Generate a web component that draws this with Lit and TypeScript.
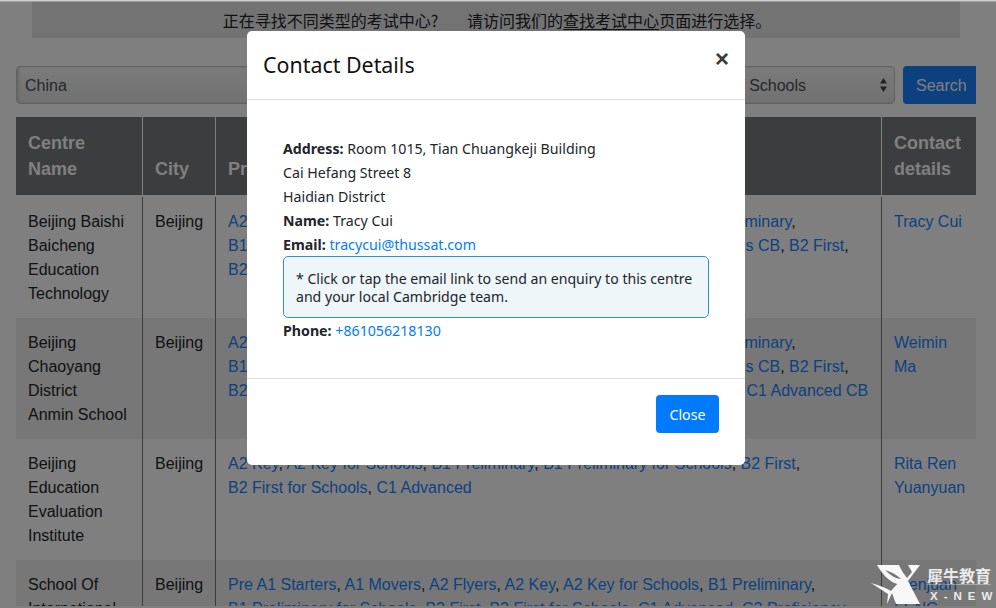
import { LitElement, html, css } from "lit";
import { customElement } from "lit/decorators.js";

type Row = { name: string[]; city: string; lines: string[][]; contact: string[] };

const ROWS: Row[] = [
  {
    name: ["Beijing Baishi", "Baicheng", "Education", "Technology"],
    city: "Beijing",
    lines: [
      ["A2 Key", "A2 Key CB", "A2 Key for Schools", "A2 Key for Schools CB", "B1 Preliminary"],
      ["B1 Preliminary CB", "B1 Preliminary for Schools", "B1 Preliminary for Schools CB", "B2 First"],
      ["B2 First CB", "B2 First for Schools", "B2 First for Schools CB"],
    ],
    contact: ["Tracy Cui"],
  },
  {
    name: ["Beijing", "Chaoyang", "District", "Anmin School"],
    city: "Beijing",
    lines: [
      ["A2 Key", "A2 Key CB", "A2 Key for Schools", "A2 Key for Schools CB", "B1 Preliminary"],
      ["B1 Preliminary CB", "B1 Preliminary for Schools", "B1 Preliminary for Schools CB", "B2 First"],
      ["B2 First CB", "B2 First for Schools", "B2 First for Schools CB", "C1 Advanced", "C1 Advanced CB"],
    ],
    contact: ["Weimin", "Ma"],
  },
  {
    name: ["Beijing", "Education", "Evaluation", "Institute"],
    city: "Beijing",
    lines: [
      ["A2 Key", "A2 Key for Schools", "B1 Preliminary", "B1 Preliminary for Schools", "B2 First"],
      ["B2 First for Schools", "C1 Advanced"],
    ],
    contact: ["Rita Ren", "Yuanyuan"],
  },
  {
    name: ["School Of", "International", "Education", "Studies"],
    city: "Beijing",
    lines: [
      ["Pre A1 Starters", "A1 Movers", "A2 Flyers", "A2 Key", "A2 Key for Schools", "B1 Preliminary"],
      ["B1 Preliminary for Schools", "B2 First", "B2 First for Schools", "C1 Advanced", "C2 Proficiency"],
    ],
    contact: ["Wenjuan", "FENG"],
  },
];

@customElement("app-root")
export class AppRoot extends LitElement {
  static styles = css`
    :host {
      display: block;
      width: 996px;
      height: 608px;
      position: relative;
      overflow: hidden;
      background: #fff;
      font-family: "Liberation Sans", "Noto Sans CJK SC", sans-serif;
      font-size: 16px;
      line-height: 24px;
      color: #212529;
    }
    .page {
      height: 604px;
      padding-top: 2px;
      overflow: hidden;
      box-sizing: content-box;
    }
    .topline {
      position: absolute;
      left: 0;
      top: 0;
      right: 0;
      height: 2px;
      background: linear-gradient(#cccccc 50%, #a0a0a0 50%);
    }
    .notice {
      margin: 0 36px 0 32px;
      height: 36px;
      background: #e6e6e6;
      display: flex;
      align-items: center;
      justify-content: center;
      padding-left: 2px;
      font-family: "Noto Sans CJK SC", "Liberation Sans", sans-serif;
      font-size: 16px;
      color: #212529;
      white-space: pre;
    }
    .notice u {
      text-underline-offset: 2px;
    }
    .search {
      display: flex;
      gap: 8px;
      margin: 28px 20px 13px 16px;
      height: 38px;
    }
    .sel {
      box-sizing: border-box;
      border: 1px solid #c4c4c4;
      border-radius: 4px;
      background: linear-gradient(#f6f6f6, #e2e2e2);
      box-shadow: inset 2px 0 2px #d0d0d0, inset 0 -1px 1px #d8d8d8;
      color: #495057;
      padding: 7px 8px 0;
      position: relative;
      white-space: nowrap;
    }
    .sel.a {
      flex: 0 0 636px;
    }
    .sel.b {
      flex: 0 0 235px;
      padding-left: 9px;
    }
    .arrows {
      position: absolute;
      right: 7px;
      top: 11px;
      display: block;
    }
    .btn {
      width: 73px;
      box-sizing: border-box;
      background: #1880ff;
      color: #fff;
      border-radius: 4px 0 0 4px;
      padding: 8px 0 0 13px;
    }
    table {
      border-collapse: separate;
      border-spacing: 0;
      table-layout: fixed;
      width: 960px;
      margin-left: 16px;
    }
    col.c1 { width: 127px; }
    col.c2 { width: 73px; }
    col.c3 { width: 666px; }
    col.c4 { width: 94px; }
    th {
      background: #797a7d;
      color: #fff;
      font-size: 18px;
      line-height: 26px;
      font-weight: 700;
      text-align: left;
      vertical-align: bottom;
      padding: 13px 12px;
      border-right: 1px solid #fff;
      border-bottom: 2px solid #fff;
    }
    th:last-child, td:last-child { border-right: 0; }
    td {
      vertical-align: top;
      padding: 13px 12px 11px;
      height: 97px;
      border-right: 1px solid #777;
      white-space: nowrap;
    }
    tbody tr:nth-child(even) td { background: #eeeeee; }
    a {
      color: #1a84ff;
      text-decoration: none;
    }
    .backdrop {
      position: absolute;
      inset: 0;
      background: rgba(0, 0, 0, 0.5);
    }
    .modal {
      position: absolute;
      left: 247px;
      top: 31px;
      width: 498px;
      height: 434px;
      box-sizing: border-box;
      background: #fff;
      border-radius: 5px;
      display: flex;
      flex-direction: column;
      font-family: "Noto Sans", sans-serif;
      font-size: 14.2px;
      line-height: 24px;
      color: #212529;
    }
    .m-head {
      height: 69px;
      flex: none;
      box-sizing: border-box;
      border-bottom: 1px solid #dee2e6;
      display: flex;
      align-items: flex-start;
      justify-content: space-between;
      padding: 17px 16px 0;
    }
    .m-title {
      font-size: 21.4px;
      line-height: 34px;
      font-weight: 400;
      color: #111;
    }
    .close {
      font-family: "Liberation Sans", sans-serif;
      font-weight: 700;
      font-size: 24px;
      line-height: 20px;
      color: #3a3a3a;
      margin: 1px 0 0 0;
    }
    .m-body {
      flex: 1;
      padding: 37px 36px 0;
    }
    .m-body b { font-weight: 700; }
    .m-body a { color: #007bff; }
    .note {
      box-sizing: border-box;
      width: 426px;
      height: 62px;
      margin: -1px 0 1px;
      background: #eef6fa;
      border: 1px solid #2e91d6;
      border-radius: 5px;
      padding: 13px 8px 0 12px;
      font-size: 14.1px;
      line-height: 18px;
      color: #212529;
    }
    .m-foot {
      flex: none;
      height: 87px;
      box-sizing: border-box;
      border-top: 1px solid #dee2e6;
      display: flex;
      justify-content: flex-end;
      align-items: flex-start;
      padding: 16px 26px 0 0;
    }
    .m-btn {
      width: 63px;
      height: 38px;
      box-sizing: border-box;
      border-radius: 4px;
      background: #007bff;
      color: #fff;
      display: flex;
      align-items: center;
      justify-content: center;
      padding-top: 1px;
    }
    .mark {
      position: absolute;
      left: 870px;
      top: 560px;
      width: 126px;
      height: 48px;
      color: #fff;
    }
    .mark svg {
      position: absolute;
      left: 0;
      top: 0;
    }
    .mark .cn {
      position: absolute;
      left: 57px;
      top: 5px;
      font-family: "Noto Sans CJK SC", sans-serif;
      font-size: 16px;
      line-height: 20px;
      font-weight: 700;
      white-space: nowrap;
      opacity: 0.85;
    }
    .mark .rule {
      position: absolute;
      left: 57px;
      top: 24px;
      width: 64px;
      height: 1px;
      background: rgba(255, 255, 255, 0.35);
    }
    .mark .en {
      position: absolute;
      left: 60px;
      top: 29px;
      font-family: "Liberation Sans", sans-serif;
      font-size: 11.5px;
      line-height: 14px;
      font-weight: 700;
      letter-spacing: 6px;
      white-space: nowrap;
      opacity: 0.85;
    }
  `;

  private renderLine(items: string[], last: boolean) {
    return html`${items.map(
      (t, i) =>
        html`<a href="#">${t}</a>${i < items.length - 1 ? ", " : last ? "" : ","}`
    )}${last ? "" : html`<br />`}`;
  }

  render() {
    return html`
      <div class="page">
        <div class="notice">正在寻找不同类型的考试中心?        请访问我们的<u>查找考试中心</u>页面进行选择。</div>
        <div class="search">
          <div class="sel a">China</div>
          <div class="sel b">
            A2 Key for Schools
            <svg class="arrows" width="7" height="14" viewBox="0 0 7 14">
              <path d="M3.5 0 L7 5.5 H0 Z M3.5 14 L0 8.5 H7 Z" fill="#444"></path>
            </svg>
          </div>
          <div class="btn">Search</div>
        </div>
        <table>
          <colgroup>
            <col class="c1" /><col class="c2" /><col class="c3" /><col class="c4" />
          </colgroup>
          <thead>
            <tr>
              <th>Centre Name</th>
              <th>City</th>
              <th>Product</th>
              <th>Contact details</th>
            </tr>
          </thead>
          <tbody>
            ${ROWS.map(
              (r) => html`<tr>
                <td>${r.name.map((n) => html`${n}<br />`)}</td>
                <td>${r.city}</td>
                <td>${r.lines.map((l, i) => this.renderLine(l, i === r.lines.length - 1))}</td>
                <td>${r.contact.map((c) => html`<a href="#">${c}</a><br />`)}</td>
              </tr>`
            )}
          </tbody>
        </table>
      </div>
      <div class="backdrop"></div>
      <div class="topline"></div>
      <div class="modal">
        <div class="m-head">
          <div class="m-title">Contact Details</div>
          <div class="close">×</div>
        </div>
        <div class="m-body">
          <div><b>Address:</b> Room 1015, Tian Chuangkeji Building</div>
          <div>Cai Hefang Street 8</div>
          <div>Haidian District</div>
          <div><b>Name:</b> Tracy Cui</div>
          <div><b>Email:</b> <a href="#">tracycui@thussat.com</a></div>
          <div class="note">* Click or tap the email link to send an enquiry to this centre and your local Cambridge team.</div>
          <div><b>Phone:</b> <a href="#">+861056218130</a></div>
        </div>
        <div class="m-foot"><div class="m-btn">Close</div></div>
      </div>
      <div class="mark">
        <svg width="58" height="48" viewBox="0 0 58 48">
          <path
            d="M7 5 H29 C31 10 34 14 37 18 L42 12 L38 5 H50 L38 21 L50 44 H26 L22 33 L17 44 L18 34 L1 23 C9 25 16 28 21 31 L27 24 C20 22 12 14 7 5 Z M15 10 C20 15 26 19 31 19 C27 15 22 12 15 10 Z"
            fill="#fff"
            fill-rule="evenodd"
            fill-opacity="0.95"
          ></path>
        </svg>
        <div class="cn">犀牛教育</div>
        <div class="rule"></div>
        <div class="en">X-NEW</div>
      </div>
    `;
  }
}
